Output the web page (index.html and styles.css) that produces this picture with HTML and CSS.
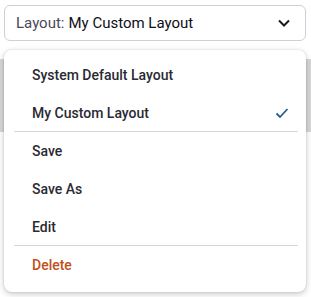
FILE: index.html
```html
<!DOCTYPE html>
<html>
<head>
    <link rel="stylesheet" href="styles.css">
</head>
<body>
    <div class="page">
        <div class="picker">
            <button class="select">
                <span class="label">Layout:</span>
                <span class="value">My Custom Layout</span>
                <svg class="chevron" width="14" height="14" viewBox="0 0 14 14">
                    <path d="M2 4.5 L7 9.5 L12 4.5" fill="none" stroke="#1b1b1f" stroke-width="2"/>
                </svg>
            </button>
            <!-- dropdown sits over the page -->
            <ul class="menu">
                <li class="option">System Default Layout</li>
                <li class="option selected divided">
                    My Custom Layout
                    <svg class="check" width="14" height="12" viewBox="0 0 14 12">
                        <path d="M1.5 6.5 L5 10 L12.5 2" fill="none" stroke="#2c5d8c" stroke-width="1.8"/>
                    </svg>
                </li>
                <li class="option">Save</li>
                <li class="option">Save As</li>
                <li class="option divided">Edit</li>
                <li class="option danger">Delete</li>
            </ul>
        </div>
        <div class="band"></div>
    </div>
</body>
</html>
```
FILE: styles.css
```css
*{
    margin: 0;
    padding: 0;
    box-sizing: border-box;
}
html, body {
    height: 100%;
}
body {
    font-family: Roboto, "Liberation Sans", sans-serif;
    background: #ffffff;
}
.page {
    min-height: 100%;
    padding-top: 5px;
}
.picker {
    position: relative;
    z-index: 1;
    margin: 0 5px 0 4px;
}
.select {
    display: flex;
    align-items: center;
    width: 100%;
    height: 36px;
    padding: 0 14px 0 11px;
    border: 1px solid #cdd0da;
    border-radius: 6px;
    background: #ffffff;
    font-family: inherit;
    font-size: 15px;
    text-align: left;
}
.label {
    color: #4a4a57;
    margin-right: 4px;
}
.value {
    flex: 1;
    color: #0f0f18;
}
.band {
    margin-top: 18px;
    height: 73px;
    background: #d7d7d7;
}
.menu {
    position: absolute;
    top: 45px;
    left: 0;
    right: 0;
    list-style: none;
    background: #ffffff;
    border-radius: 8px;
    padding: 6px 0 8px;
    box-shadow: 0 2px 6px rgba(0, 0, 0, 0.22), 0 0 2px rgba(0, 0, 0, 0.12);
}
.option {
    position: relative;
    display: flex;
    align-items: center;
    height: 38px;
    padding-left: 28px;
    font-size: 14px;
    font-weight: 500;
    color: #2a2a33;
}
.divided::after {
    content: "";
    position: absolute;
    left: 10px;
    right: 8px;
    bottom: 0;
    height: 1px;
    background: #d3d6dd;
}
.check {
    position: absolute;
    right: 17px;
    top: 13px;
}
.danger {
    color: #c0501b;
}
```
